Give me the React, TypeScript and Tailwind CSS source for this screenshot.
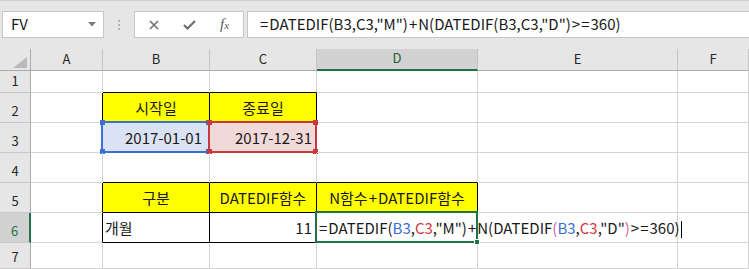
import React from "react";
import clsx from "clsx";

const COLS = ["A", "B", "C", "D", "E", "F"];
const ROWS = [1, 2, 3, 4, 5, 6, 7];

// cells that carry the black table border
const TABLE = new Set(["B2", "C2", "B3", "C3", "B5", "C5", "D5", "B6", "C6", "D6"]);
const YELLOW = new Set(["B2", "C2", "B5", "C5", "D5"]);

const inTable = (c: number, r: number) => c >= 0 && c < COLS.length && TABLE.has(COLS[c] + r);

// operators are set a little wider in Excel's font
const Op = ({ children }: { children: React.ReactNode }) => <span className="px-[1px]">{children}</span>;

function Formula({ colored }: { colored?: boolean }) {
  const blue = colored ? "text-[#3b6fd4]" : "";
  const red = colored ? "text-[#d23a3a]" : "";
  const pink = colored ? "text-[#e0609a]" : "";
  return (
    <>
      <span className="pr-[1px]">=</span>DATEDIF(<span className={blue}>B3</span>,<span className={red}>C3</span>,"M")
      <Op>+</Op>N(DATEDIF<span className={pink}>(</span>
      <span className={blue}>B3</span>,<span className={red}>C3</span>,"D"<span className={pink}>)</span>
      <Op>&gt;</Op>
      <span className="pr-[1px]">=</span>360)
    </>
  );
}

function Corners({ color }: { color: string }) {
  return (
    <>
      <span className={clsx("absolute left-[-3px] top-[-3px] w-[5px] h-[5px]", color)} />
      <span className={clsx("absolute right-[-3px] top-[-3px] w-[5px] h-[5px]", color)} />
      <span className={clsx("absolute left-[-3px] bottom-[-3px] w-[5px] h-[5px]", color)} />
      <span className={clsx("absolute right-[-3px] bottom-[-3px] w-[5px] h-[5px]", color)} />
    </>
  );
}

function CellContent({ id }: { id: string }) {
  switch (id) {
    case "B2":
      return <span className="w-full text-center">시작일</span>;
    case "C2":
      return <span className="w-full text-center">종료일</span>;
    case "B3":
      return (
        <>
          <div className="absolute left-[-2px] top-[-2px] right-[-1px] bottom-[-1px] border-2 border-[#3b6fd4] bg-[#dae3f3]">
            <Corners color="bg-[#3b6fd4]" />
          </div>
          <span className="relative w-full text-right pr-[7px]">2017-01-01</span>
        </>
      );
    case "C3":
      return (
        <>
          <div className="absolute left-[-2px] top-[-2px] right-[-1px] bottom-[-1px] border-2 border-[#c8383d] bg-[#f2d9d9]">
            <Corners color="bg-[#c8383d]" />
          </div>
          <span className="relative w-full text-right pr-[4px]">2017-12-31</span>
        </>
      );
    case "B5":
      return <span className="w-full text-center">구분</span>;
    case "C5":
      return <span className="w-full text-center">DATEDIF함수</span>;
    case "D5":
      return <span className="w-full text-center">N함수<Op>+</Op>DATEDIF함수</span>;
    case "B6":
      return <span className="w-full pl-[2px]">개월</span>;
    case "C6":
      return <span className="w-full text-right pr-[4px]">11</span>;
    case "D6":
      return (
        <>
          <div className="absolute left-[-2px] top-[-2px] right-[-1px] bottom-[-1px] border-2 border-[#217346]">
            <span className="absolute right-[-4px] bottom-[-4px] w-[6px] h-[6px] bg-[#217346] border border-white" />
          </div>
          <span className="relative pl-[2px] whitespace-nowrap">
            <Formula colored />
            <span className="inline-block w-px h-[17px] bg-black ml-[1px] align-[-4px]" />
          </span>
        </>
      );
    default:
      return null;
  }
}

export default function App() {
  return (
    <div
      className="w-[749px] h-[269px] overflow-hidden bg-[#e6e6e6] text-[#1a1a1a]"
      style={{ fontFamily: '"Noto Sans CJK KR", "Noto Sans", sans-serif' }}
    >
      {/* formula bar */}
      <div className="h-[49px] border-t border-[#d0d0d0] flex items-start pt-[10px]">
        <div className="ml-[2px] w-[102px] h-[27px] bg-white border border-[#c6c6c6] flex items-center justify-between pl-[8px] pr-[7px]">
          <span className="text-[15px]">FV</span>
          <svg width="8" height="5" viewBox="0 0 8 5">
            <path d="M0 0h8L4 4.5z" fill="#7a7a7a" />
          </svg>
        </div>
        <div className="w-[30px] h-[27px] flex flex-col items-center justify-center gap-[2px]">
          <span className="w-[2px] h-[2px] bg-[#b4b4b4]" />
          <span className="w-[2px] h-[2px] bg-[#b4b4b4]" />
          <span className="w-[2px] h-[2px] bg-[#b4b4b4]" />
        </div>
        <div className="w-[110px] h-[27px] bg-white border border-[#c6c6c6] flex items-center">
          <svg className="ml-[14px]" width="10" height="10" viewBox="0 0 10 10">
            <path d="M1 1l8 8M9 1l-8 8" stroke="#6e6e6e" strokeWidth="1.6" />
          </svg>
          <svg className="ml-[24px]" width="13" height="10" viewBox="0 0 13 10">
            <path d="M1 5l3.5 3.5L12 1" stroke="#6e6e6e" strokeWidth="2.2" fill="none" />
          </svg>
          <span
            className="ml-[24px] italic text-[#5a5a5a] text-[15px] leading-none"
            style={{ fontFamily: '"Liberation Serif", serif' }}
          >
            f<span className="text-[11px]">x</span>
          </span>
        </div>
        <div className="ml-[3px] flex-1 h-[27px] bg-white border border-[#c6c6c6] border-r-0 flex items-center pl-[12px] text-[15px] whitespace-nowrap">
          <span>
            <Formula />
          </span>
        </div>
      </div>

      {/* sheet */}
      <div className="grid grid-cols-[31px_72px_107px_107px_161px_200px_71px] grid-rows-[22px_22px_30px_30px_30px_30px_30px_26px] bg-white text-[15px]">
        {/* column headers */}
        <div className="bg-[#e6e6e6] border-r border-b border-[#ababab] relative">
          <svg className="absolute left-[13px] top-[8px]" width="14" height="11" viewBox="0 0 14 11">
            <path d="M14 0v11H0z" fill="#b9b9b9" />
          </svg>
        </div>
        {COLS.map((c) => (
          <div
            key={c}
            className={clsx(
              "flex items-center justify-center pb-[2px] text-[13px] border-r border-r-[#c4c4c4]",
              c === "D"
                ? "bg-[#d2d2d2] text-[#1d5e3a] border-b-2 border-b-[#217346]"
                : "bg-[#e6e6e6] text-[#262626] border-b border-b-[#ababab]"
            )}
          >
            {c}
          </div>
        ))}

        {ROWS.map((r) => (
          <React.Fragment key={r}>
            <div
              className={clsx(
                "flex items-end justify-center pb-[2px] text-[13px] border-b border-b-[#c8c8c8]",
                r === 6
                  ? "bg-[#d2d2d2] text-[#217346] border-r-2 border-r-[#217346]"
                  : "bg-[#e6e6e6] text-[#262626] border-r border-r-[#ababab]"
              )}
            >
              {r}
            </div>
            {COLS.map((c, ci) => {
              const id = c + r;
              const rightBlack = inTable(ci, r) || inTable(ci + 1, r);
              const bottomBlack = inTable(ci, r) || inTable(ci, r + 1);
              const leftBlack = ci === 0 && inTable(0, r);
              return (
                <div
                  key={id}
                  className={clsx(
                    "relative flex items-end pb-[4px] leading-[20px] border-r border-b",
                    rightBlack ? "border-r-black" : "border-r-[#d4d4d4]",
                    bottomBlack ? "border-b-black" : "border-b-[#d4d4d4]",
                    leftBlack && "border-l border-l-black",
                    YELLOW.has(id) && "bg-[#ffff00]",
                    id === "D6" && "z-10"
                  )}
                >
                  <CellContent id={id} />
                </div>
              );
            })}
          </React.Fragment>
        ))}
      </div>
    </div>
  );
}
